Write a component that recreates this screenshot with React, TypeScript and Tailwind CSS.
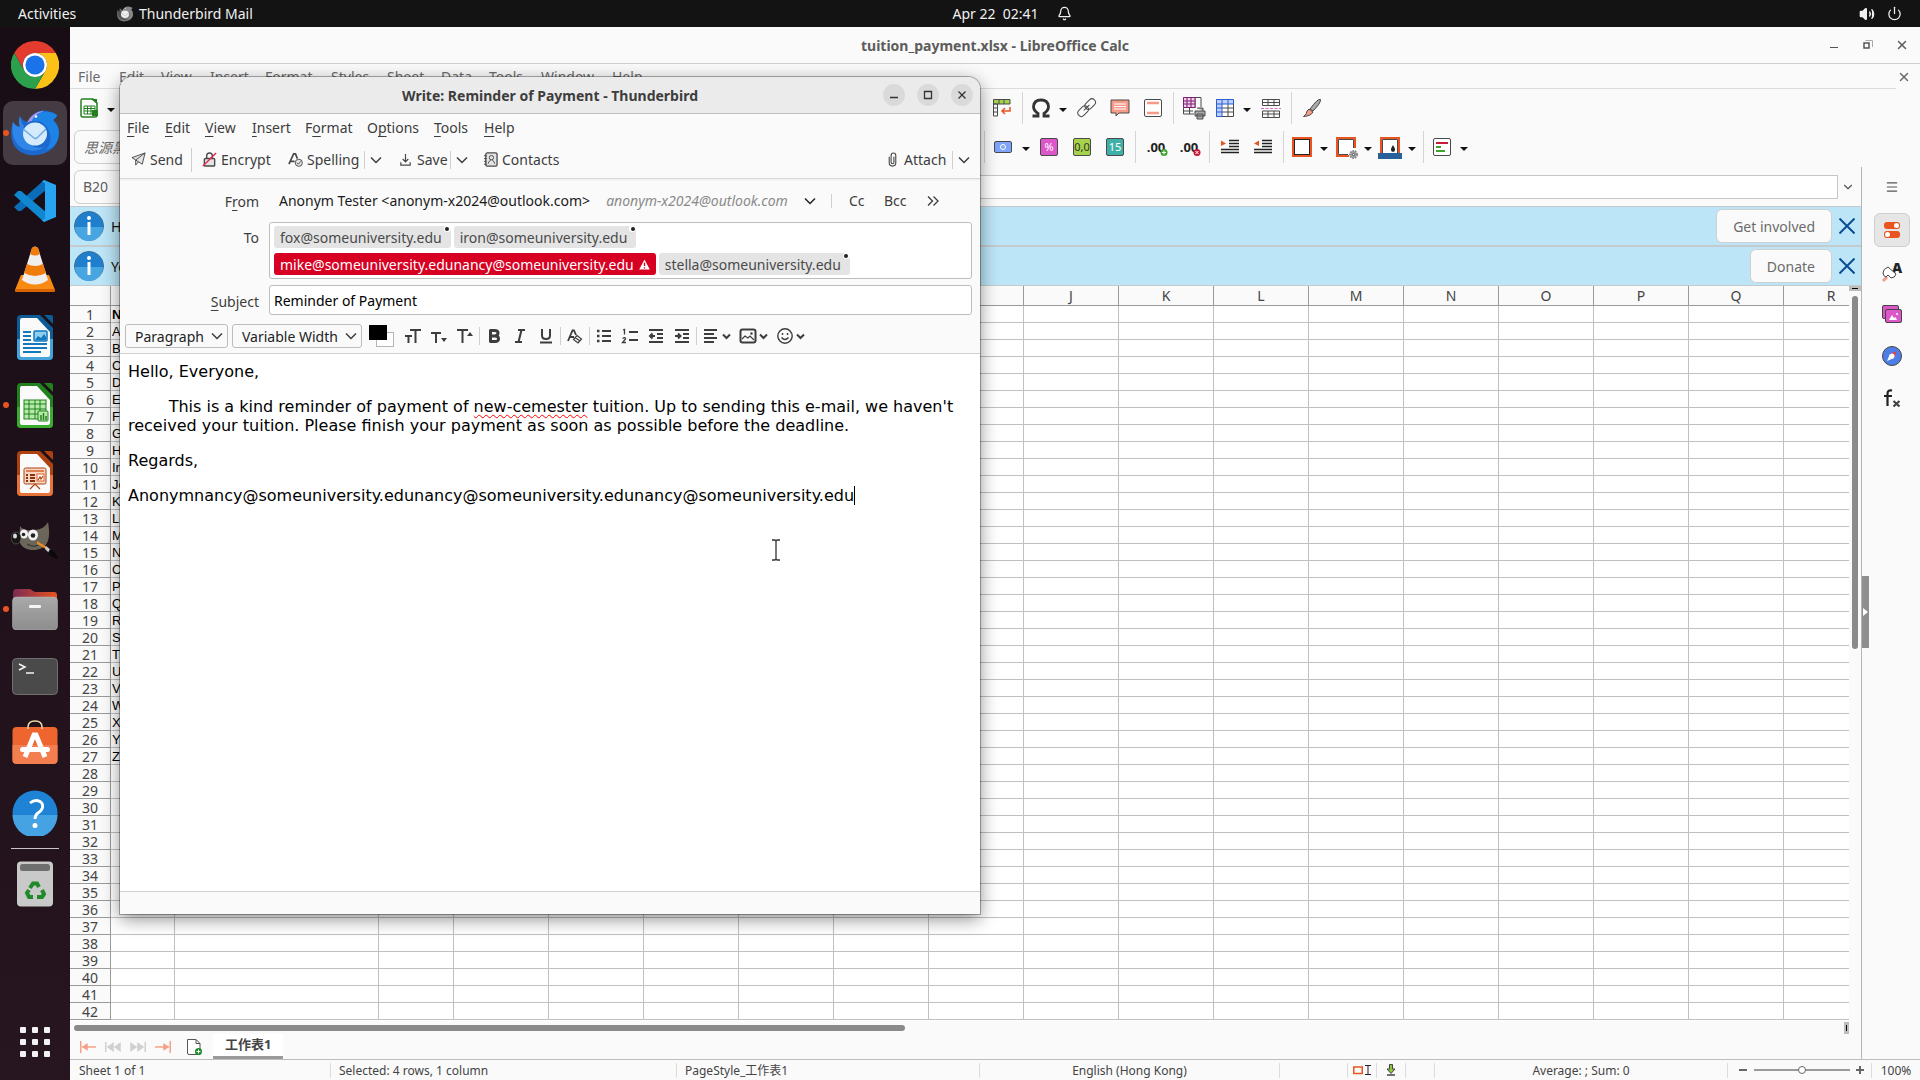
import React from 'react';
import { Bell, Power, Volume2, X, ChevronDown, Menu } from 'lucide-react';

const COLUMNS = [
  { name: 'A', width: 'w-[64px]' },
  { name: 'B', width: 'w-[204px]' },
  { name: 'C', width: 'w-[75px]' },
  ...'DEFGHIJKLMNOPQR'.split('').map((name) => ({ name, width: 'w-[95px]' })),
];

const FIRST_CELLS = [
  'N', 'A', 'B', 'C', 'D', 'E', 'F', 'G', 'H', 'Ir', 'Jo', 'K', 'Li', 'M', 'N', 'O', 'P', 'Q', 'R', 'S', 'T', 'U', 'V',
  'W', 'X', 'Y', 'Z',
];

const ROW_COUNT = 42;

const CALC_MENU = [
  ['File', 'w-[41px]'],
  ['Edit', 'w-[42px]'],
  ['View', 'w-[49px]'],
  ['Insert', 'w-[55px]'],
  ['Format', 'w-[66px]'],
  ['Styles', 'w-[56px]'],
  ['Sheet', 'w-[54px]'],
  ['Data', 'w-[48px]'],
  ['Tools', 'w-[52px]'],
  ['Window', 'w-[71px]'],
  ['Help', 'w-[40px]'],
];

// label, index of the underlined letter, width
const MAIL_MENU: [string, number, string][] = [
  ['File', 0, 'w-[38px]'],
  ['Edit', 0, 'w-[40px]'],
  ['View', 0, 'w-[47px]'],
  ['Insert', 0, 'w-[53px]'],
  ['Format', 1, 'w-[62px]'],
  ['Options', 1, 'w-[67px]'],
  ['Tools', 0, 'w-[50px]'],
  ['Help', 0, 'w-[40px]'],
];

type Children = { children?: React.ReactNode };

/* ---------- Dock icons ---------- */

const Chrome = () => (
  <svg viewBox="0 0 48 48" className="size-12">
    <path d="M24 12H44.8A24 24 0 0 0 3.2 12L13.6 30A12 12 0 0 1 24 12Z" fill="#e33b2e" />
    <path d="M44.8 12H24A12 12 0 0 1 34.4 30L24 48A24 24 0 0 0 44.8 12Z" fill="#fbc116" />
    <path d="M3.2 12L13.6 30A12 12 0 0 0 34.4 30L24 48A24 24 0 0 1 3.2 12Z" fill="#2da04e" />
    <circle cx="24" cy="24" r="12" fill="#fff" />
    <circle cx="24" cy="24" r="9.6" fill="#1a73e8" />
  </svg>
);

const Thunderbird = ({ mono = false }: { mono?: boolean }) => (
  <svg viewBox="0 0 48 48" className={mono ? 'size-4' : 'size-12'}>
    <path
      d="M9 7Q7 13 9 17Q5 18 2 13C-1 22 0 32 4 38C9 44 17 47 25 46C39 45 48 36 48 24C48 18 46 14 42 11Q46 8 46 6Q42 3 38 2.500C34 1 30 1 26 3C22 5 19 8 17 13Q11 12 9 7Z"
      fill={mono ? '#777' : '#1c68cf'}
    />
    <path d="M2 13C0 22 2 31 8 37C15 43 27 43 34 38C22 41 13 34 12 22L13 17Q10 14 9 7Q7 13 9 18Q5 18 2 13Z" fill={mono ? '#555' : '#2f86e6'} />
    <path d="M16 14C19 7 25 2 33 2C26 5 23 8 21 12Q18 12 16 14Z" fill={mono ? '#999' : '#a494ee'} />
    <path d="M21 12C23 6 30 2 38 3Q42 3 46 6Q46 8 42 11C47 16 49 22 47 29C45 36 41 40 34 41C40 36 41 29 38 22C35 14 28 11 21 12Z" fill={mono ? '#888' : '#1b84e6'} />
    <ellipse cx="24" cy="25" rx="12" ry="11.500" fill={mono ? '#eee' : '#d5ebfc'} />
    <path d="M12 20L23 29Q24 30 26 29L35 20" fill="none" stroke={mono ? '#aaa' : '#6aa9e6'} strokeWidth="1.500" />
    <circle cx="25" cy="7.500" r="1.300" fill="#fff" />
  </svg>
);

const VsCode = () => (
  <svg viewBox="0 0 42 42" className="size-[42px]">
    <path d="M0 27L4 31L7 31L33 9V2L30 0Z" fill="#0b6db8" />
    <path d="M0 15L4 11L7 11L33 33V40L30 42Z" fill="#1187d2" />
    <path d="M30 0L42 5V37L30 42L28 40L31 39V3L28 2Z" fill="#27a5f2" />
  </svg>
);

const Vlc = () => (
  <svg viewBox="0 0 42 46" className="h-[46px] w-[42px]">
    <path d="M7 29H35L41 44Q41 46 39 46H3Q1 46 1 44Z" fill="#f98b12" />
    <path d="M1 43H41V45Q41 46 39 46H3Q1 46 1 45Z" fill="#d96400" />
    <path d="M18 2Q21 -1 24 2L34 34Q21 43 8 34Z" fill="#f0efee" />
    <path d="M18 2Q21 -1 24 2L26 8Q21 11 16 8Z" fill="#f07c0c" />
    <path d="M13 18Q21 22 29 18L32 27Q21 33 10 27Z" fill="#f07c0c" />
  </svg>
);

const OfficeIcon = ({ color, light, children }: { color: string; light: string } & Children) => (
  <svg viewBox="0 0 36 45" className="h-[45px] w-9">
    <path d="M4 0H24L36 11V41Q36 45 32 45H4Q0 45 0 41V4Q0 0 4 0Z" fill={color} />
    <path d="M4 24H36V41Q36 45 32 45H4Q0 45 0 41V24Z" fill={light} />
    <path d="M5 3H20L33 17V40Q33 42 31 42H5Q3 42 3 40V5Q3 3 5 3Z" fill="#fafafa" />
    <path d="M23 0H26L36 9V13Z" fill="#1c1118" />
    <path d="M27 0H34Q36 0 36 2V9Z" fill={color} />
    {children}
  </svg>
);

const Writer = () => (
  <OfficeIcon color="#0d5c95" light="#45a3dc">
    <path d="M6 17H14M6 21H14M6 25H14M6 29H30M6 33H30M6 37H24" stroke="#1279bd" strokeWidth="2" />
    <rect x="17" y="16" width="13" height="10" rx="1" fill="#8fcdf2" stroke="#1279bd" strokeWidth="1.500" />
    <path d="M18 25L21 21L24 23L27 19L29 22V25Z" fill="#1279bd" />
  </OfficeIcon>
);

const Calc = () => (
  <OfficeIcon color="#23811d" light="#3aac2f">
    <rect x="7" y="17" width="22" height="19" fill="#b6eaaa" stroke="#23811d" />
    <path d="M7 21H29M7 26H29M7 31H29M12 17V36M18 17V36M23 17V36" stroke="#23811d" />
    <rect x="21" y="28" width="10" height="10" rx="1" fill="#b6eaaa" stroke="#23811d" />
    <path d="M24 37V32M26.500 37V30M29 37V33" stroke="#23811d" strokeWidth="1.500" />
  </OfficeIcon>
);

const Impress = () => (
  <OfficeIcon color="#ad4210" light="#e6733a">
    <rect x="7" y="17" width="22" height="16" rx="1.500" fill="#f8d6c4" stroke="#ad4210" />
    <path d="M9 20H27" stroke="#d9632a" strokeWidth="1.500" />
    <path d="M9 24H11M13 24H18M9 27H11M13 27H18M9 30H11M13 30H18" stroke="#8a320a" strokeWidth="2" />
    <rect x="20" y="23" width="7" height="7" fill="#fff" stroke="#d9632a" />
    <path d="M21 29L23 26L24 28L26 25M13 38L18 33L23 38" stroke="#ad4210" strokeWidth="1.200" fill="none" />
  </OfficeIcon>
);

const Gimp = () => (
  <svg viewBox="0 2 48 48" className="size-12">
    <path d="M9 11C12 15 16 16 22 15C30 15 34 12 37 7C39 18 39 29 31 33C23 37 12 35 9 28C8 22 9 16 9 11Z" fill="#6b665a" />
    <ellipse cx="13" cy="19" rx="4" ry="4.500" fill="#f2f2f2" />
    <circle cx="12.500" cy="19.500" r="1.800" fill="#222" />
    <ellipse cx="22" cy="20" rx="5" ry="5.500" fill="#f2f2f2" />
    <circle cx="22" cy="20.500" r="2.300" fill="#222" />
    <ellipse cx="5" cy="23" rx="5" ry="6" fill="#161616" stroke="#777" strokeWidth="0.500" />
    <ellipse cx="4" cy="21" rx="2" ry="2.500" fill="#ddd" />
    <path d="M16 29Q24 34 30 28" stroke="#2c2a24" fill="none" />
    <path d="M26 26L36 32L35 34L26 29Z" fill="#e98b25" />
    <path d="M35 31L40 35L38 38L34 34Z" fill="#c9c9c9" />
    <path d="M39 34Q45 37 47 44Q40 42 37 38Z" fill="#0a0a0a" />
  </svg>
);

const Files = () => (
  <svg viewBox="0 0 46 42" className="h-[42px] w-[46px]">
    <defs>
      <linearGradient id="folder" x1="0" x2="1">
        <stop offset="0" stopColor="#7b2a55" />
        <stop offset="1" stopColor="#e95420" />
      </linearGradient>
      <linearGradient id="front" x1="0" x2="0" y1="0" y2="1">
        <stop offset="0" stopColor="#a9a9a9" />
        <stop offset="1" stopColor="#8d8d8d" />
      </linearGradient>
    </defs>
    <path d="M1 12V5Q1 1 4 1H17Q19 1 21 3L23 4H42Q45 4 45 7V14Z" fill="url(#folder)" />
    <rect x="0.500" y="9" width="45" height="33" rx="4" fill="url(#front)" stroke="#bbb" strokeWidth="0.500" />
    <rect x="17" y="17" width="12" height="3" rx="1" fill="#f4f4f4" />
  </svg>
);

const Terminal = () => (
  <svg viewBox="0 0 46 38" className="h-[38px] w-[46px]">
    <rect x="0.500" y="0.500" width="45" height="36" rx="4" fill="#4a4a4a" stroke="#707070" />
    <path d="M7 6L13 9L7 12M14 15H22" stroke="#f4f4f4" strokeWidth="1.500" fill="none" />
  </svg>
);

const Software = () => (
  <svg viewBox="0 0 46 50" className="h-[50px] w-[46px]">
    <rect x="0.500" y="7" width="45" height="37" rx="4" fill="#ee6530" />
    <path d="M0.500 25H45.500V40Q45.500 44 41 44H5Q0.500 44 0.500 40Z" fill="#f37f50" />
    <path d="M16 9V7Q16 1 23 1T30 7V9" stroke="#f3dca8" strokeWidth="1.500" fill="none" />
    <path d="M13 37L22 15H24L33 37" stroke="#fff" strokeWidth="5" fill="none" />
    <rect x="8" y="27" width="30" height="5" rx="2.500" fill="#fff" />
  </svg>
);

const HelpIcon = () => (
  <svg viewBox="0 0 46 46" className="size-[46px]">
    <circle cx="23" cy="23" r="22.500" fill="#1e82d5" />
    <path d="M0.500 25H45.500A22.500 22.500 0 0 1 0.500 25Z" fill="#45a3e4" />
    <path d="M18 13Q23 9 28 11.500Q32 14 30 19Q29 21 26 23Q23 25 23 29" stroke="#fff" strokeWidth="2.800" fill="none" />
    <circle cx="23" cy="35.500" r="2.500" fill="#fff" />
  </svg>
);

const Trash = () => (
  <svg viewBox="0 0 38 46" className="h-[46px] w-[38px]">
    <rect x="1" y="0.500" width="36" height="45" rx="4" fill="#c9c9c9" />
    <rect x="4" y="3" width="30" height="7" rx="2.500" fill="#6f6f6f" />
    <g fill="none" stroke="#218a28" strokeWidth="4">
      <path d="M14 27L17 22.500H21L23 26" />
      <path d="M26 29L28 33L26 36H21" />
      <path d="M17 36H13L11 32L13 29" />
    </g>
  </svg>
);

const DOCK: { label: string; icon: React.ReactNode; running?: boolean; active?: boolean }[] = [
  { label: 'Google Chrome', icon: <Chrome /> },
  { label: 'Thunderbird Mail', icon: <Thunderbird />, running: true, active: true },
  { label: 'Visual Studio Code', icon: <VsCode /> },
  { label: 'VLC media player', icon: <Vlc /> },
  { label: 'LibreOffice Writer', icon: <Writer /> },
  { label: 'LibreOffice Calc', icon: <Calc />, running: true },
  { label: 'LibreOffice Impress', icon: <Impress /> },
  { label: 'GIMP', icon: <Gimp /> },
  { label: 'Files', icon: <Files />, running: true },
  { label: 'Terminal', icon: <Terminal /> },
  { label: 'Ubuntu Software', icon: <Software /> },
  { label: 'Help', icon: <HelpIcon /> },
];

function DockButton({ label, active, running, children }: { label: string; active?: boolean; running?: boolean } & Children) {
  return (
    <button
      aria-label={label}
      className={`relative flex size-16 shrink-0 items-center justify-center rounded-[10px] ${active ? 'bg-[#453c43]' : ''}`}
    >
      {running && <span className="absolute top-1/2 left-0 size-[6px] -translate-y-1/2 rounded-full bg-[#e95420]" />}
      {children}
    </button>
  );
}

function Dock() {
  return (
    <nav className="flex w-[70px] shrink-0 flex-col items-center gap-1 bg-gradient-to-b from-[#180d15] to-[#27151f] py-[6px]">
      {DOCK.map((app) => (
        <DockButton key={app.label} label={app.label} active={app.active} running={app.running}>
          {app.icon}
        </DockButton>
      ))}
      <hr className="-my-px h-px w-12 shrink-0 border-0 bg-[#c9c5c8]" />
      <DockButton label="Trash">
        <Trash />
      </DockButton>
      <div className="flex-1" />
      <DockButton label="Show Applications">
        <span className="grid grid-cols-3 gap-[6px]">
          {Array.from({ length: 9 }, (_, i) => (
            <span key={i} className="size-[6px] rounded-[1px] bg-[#f2f2f2]" />
          ))}
        </span>
      </DockButton>
    </nav>
  );
}

function TopBar() {
  return (
    <header className="grid h-[27px] shrink-0 grid-cols-[1fr_auto_1fr] items-center bg-[#131313] text-[14px] text-[#f0f0f0]">
      <div className="flex items-center pl-[18px]">
        <button className="w-[99px] text-left">Activities</button>
        <button className="flex items-center gap-[6px]">
          <Thunderbird mono />
          Thunderbird Mail
        </button>
      </div>
      <button className="flex items-center gap-[18px] pl-[104px]">
        <span className="whitespace-pre">Apr 22  02:41</span>
        <Bell size={15} strokeWidth={2} />
      </button>
      <div className="flex items-center justify-end gap-3 pr-[18px]">
        <button aria-label="Volume">
          <Volume2 size={16} strokeWidth={2} fill="#f0f0f0" />
        </button>
        <button aria-label="Power">
          <Power size={15} strokeWidth={2} />
        </button>
      </div>
    </header>
  );
}

/* ---------- Calc toolbars ---------- */

const Tool = ({ label, width, children }: { label: string; width: string } & Children) => (
  <button aria-label={label} className={`flex shrink-0 items-center ${width}`}>
    <svg viewBox="0 0 24 24" className="size-6 overflow-visible" fill="none" stroke="#4a4a4a">
      {children}
    </svg>
  </button>
);

const Caret = ({ width }: { width: string }) => (
  <button aria-label="More" className={`flex shrink-0 items-center ${width}`}>
    <svg viewBox="0 0 8 6" className="mt-[3px] h-[6px] w-2">
      <path d="M0 1H8L4 5Z" fill="#111" />
    </svg>
  </button>
);

const Sep = ({ width }: { width: string }) => (
  <div className={`flex shrink-0 ${width}`}>
    <span className="h-8 w-px bg-[#d5d5d5]" />
  </div>
);

function StandardToolbar() {
  return (
    <div className="flex h-[38px] shrink-0 items-center overflow-hidden pl-[7px]">
      <Tool label="Templates" width="w-[30px]">
        <path d="M5 3H16L20 7V19Q20 21 18 21H6Q4 21 4 19V5Q4 3 5 3Z" fill="#fff" stroke="#23811d" strokeWidth="1.500" />
        <path d="M14 3H20V8Z" fill="#23811d" stroke="none" />
        <path d="M7 10H18V18H7ZM7 12.500H18M7 15H18M10.500 10V18M14 10V18" stroke="#23811d" />
        <path d="M15 14H21V20H15Z" fill="#23811d" stroke="none" />
      </Tool>
      <Caret width="w-[16px]" />
      <div className="w-[867px] shrink-0" />
      <Tool label="Pivot table" width="w-[32px]">
        <path d="M3.500 3.500H20V8H3.500Z" fill="#a6d34b" />
        <path d="M3.500 8H7.500V20H3.500ZM3.500 12H7.500M3.500 16H7.500M9 3.500V8M14 3.500V8" />
        <path d="M20 11V15H12M15 12L12 15L15 18" stroke="#e95420" strokeWidth="1.500" />
      </Tool>
      <Sep width="w-[7px]" />
      <Tool label="Special character" width="w-[30px]">
        <path
          d="M3.500 20H9V17.500Q4.500 14.500 4.500 10.500Q5 4 12 4T19.500 10.500Q19.500 14.500 15 17.500V20H20.500"
          stroke="#333"
          strokeWidth="2.800"
        />
      </Tool>
      <Caret width="w-[16px]" />
      <Tool label="Hyperlink" width="w-[33px]">
        <g transform="rotate(-45 12 12)">
          <rect x="1" y="8" width="12" height="7" rx="3.500" />
          <rect x="11" y="8" width="12" height="7" rx="3.500" />
          <path d="M8 11.500H16" />
        </g>
      </Tool>
      <Tool label="Comment" width="w-[33px]">
        <path d="M3 4H21V17H11L8 20V17H3Z" fill="#f79b89" />
        <path d="M6 8H18M6 10.500H18M6 13H18" stroke="#fff" />
      </Tool>
      <Tool label="Headers and footers" width="w-[32px]">
        <rect x="3.500" y="3.500" width="17" height="17" rx="1.500" fill="#fff" />
        <path d="M6 7H18M6 17H18" stroke="#f79b89" strokeWidth="2.500" />
      </Tool>
      <Sep width="w-[9px]" />
      <Tool label="Print area" width="w-[31px]">
        <path d="M1.500 1.500H19M19 1.500V11M1.500 12V18H12M7.500 12V18M1.500 15H11M13 1.500V12" />
        <path d="M1.500 1.500H13V11.500H1.500ZM1.500 5H13M1.500 8H13M5 1.500V11.500M9 1.500V11.500" fill="#f2cdee" stroke="#7a1f6d" />
        <path d="M13 15H23V20H13ZM15 12H21V15M15 18H21V23H15Z" fill="#aaa" />
      </Tool>
      <Tool label="Freeze rows and columns" width="w-[30px]">
        <path d="M3.500 3.500H20.500V20.500H3.500ZM9 12H20.500M9 16H20.500M15 8V20.500" fill="#fff" />
        <path d="M3.500 3.500H20.500V8H9V20.500H3.500ZM3.500 8H9M3.500 12H9M3.500 16H9M9 3.500V8M15 3.500V8" fill="#bcd0fb" stroke="#2b5fd3" />
      </Tool>
      <Caret width="w-[16px]" />
      <Tool label="Split window" width="w-[32px]">
        <path d="M3.500 3.500H20.500V9.500H3.500ZM3.500 6.500H20.500M9 3.500V9.500M15 3.500V9.500M3.500 15H20.500V21.500H3.500ZM3.500 18H20.500M9 15V21.500M15 15V21.500" />
        <path d="M2 12.500H22" stroke="#dd70c8" strokeDasharray="3 1.500" />
      </Tool>
      <Sep width="w-[9px]" />
      <Tool label="Show draw functions" width="w-[30px]">
        <path d="M20.500 3.500Q18 2 10 13L13 15Q21 7 20.500 3.500Z" fill="#a9a9a9" />
        <path d="M9 13L13 16Q11 20 3.500 20.500Q7 18 7 15Z" fill="#f79b89" />
      </Tool>
    </div>
  );
}

const LabelTool = ({ label, width, fill, color, text }: { label: string; width: string; fill: string; color: string; text: string }) => (
  <Tool label={label} width={width}>
    <rect x="3.500" y="3.500" width="17" height="17" rx="1.500" fill={fill} />
    <text x="12" y="16" textAnchor="middle" fontSize="11" fill={color} stroke="none">
      {text}
    </text>
  </Tool>
);

const DecimalTool = ({ label, width, color, mark }: { label: string; width: string; color: string; mark: string }) => (
  <Tool label={label} width={width}>
    <text x="11" y="17" textAnchor="middle" fontSize="13" fontWeight="700" fill="#222" stroke="none">
      .00
    </text>
    <circle cx="19" cy="17.500" r="3.500" fill={color} stroke="none" />
    <path d={mark} stroke="#fff" />
  </Tool>
);

const IndentTool = ({ label, width, arrow }: { label: string; width: string; arrow: string }) => (
  <Tool label={label} width={width}>
    <path d="M11 5.500H21M11 8.500H21M11 11.500H21M3 14.500H21M3 17.500H21" stroke="#222" strokeWidth="1.300" />
    <path d={arrow} fill="#e95420" stroke="none" />
  </Tool>
);

function FormattingToolbar() {
  return (
    <div className="flex h-10 shrink-0 items-center overflow-hidden pl-1">
      <input
        aria-label="Font Name"
        defaultValue="思源黑体"
        className="h-[34px] w-[160px] shrink-0 rounded-md border border-[#cfcfcf] bg-[#fafafa] px-[9px] text-[14px] text-[#6b6b6b] italic"
      />
      <div className="w-[750px] shrink-0" />
      <Sep width="w-[7px]" />
      <Tool label="Currency" width="w-[31px]">
        <rect x="3.500" y="6.500" width="17" height="11" rx="1.500" fill="#7ea5fb" />
        <circle cx="12" cy="12" r="2.500" stroke="#fff" />
      </Tool>
      <Caret width="w-[15px]" />
      <LabelTool label="Percent" width="w-[33px]" fill="#dd57cb" color="#fff" text="%" />
      <LabelTool label="Number" width="w-[33px]" fill="#a6d34b" color="#333" text="0,0" />
      <LabelTool label="Date" width="w-[32px]" fill="#3fb0a7" color="#fff" text="15" />
      <Sep width="w-[10px]" />
      <DecimalTool label="Add decimal place" width="w-[33px]" color="#3ba529" mark="M17 17.500H21M19 15.500V19.500" />
      <DecimalTool label="Delete decimal place" width="w-[31px]" color="#c61b3b" mark="M17.500 16L20.500 19M20.500 16L17.500 19" />
      <Sep width="w-[9px]" />
      <IndentTool label="Increase indent" width="w-[33px]" arrow="M3 5.500L8 8.500L3 11Z" />
      <IndentTool label="Decrease indent" width="w-[32px]" arrow="M8 5.500L3 8.500L8 11Z" />
      <Sep width="w-[7px]" />
      <Tool label="Borders" width="w-[30px]">
        <rect x="3" y="3" width="18" height="18" fill="#fff" stroke="#e95420" strokeWidth="2" />
        <rect x="4.500" y="4.500" width="15" height="15" stroke="#222" />
      </Tool>
      <Caret width="w-[14px]" />
      <Tool label="Border style" width="w-[30px]">
        <path d="M15 21H3V3H21V13" fill="#fff" stroke="#e95420" strokeWidth="2" />
        <path d="M14 19.500H4.500V4.500H19.500V13" />
        <circle cx="19.500" cy="19.500" r="3.500" fill="#aaa" stroke="#888" strokeDasharray="1.500 1" strokeWidth="2" />
        <circle cx="19.500" cy="19.500" r="1.200" fill="#fff" />
      </Tool>
      <Caret width="w-[14px]" />
      <Tool label="Border color" width="w-[30px]">
        <path d="M3 19V3H21V19" fill="#fff" stroke="#e95420" strokeWidth="2" />
        <path d="M4.500 18V4.500H19.500V18" />
        <path d="M15 10Q11 16 15 17Q19 16 15 10Z" fill="#222" stroke="none" />
        <rect x="0" y="18" width="24" height="6" fill="#2a6099" stroke="none" />
      </Tool>
      <Caret width="w-[15px]" />
      <Sep width="w-[7px]" />
      <Tool label="Conditional" width="w-[30px]">
        <rect x="3.500" y="3.500" width="17" height="17" rx="1.500" fill="#fff" />
        <path d="M6 8H18" stroke="#c61b3b" strokeWidth="2" />
        <path d="M6 12H11M6 16H15" stroke="#3ba529" strokeWidth="2" />
      </Tool>
      <Caret width="w-[14px]" />
    </div>
  );
}

function InfoBar({ text, action }: { text: string; action: string }) {
  return (
    <div className="flex h-10 shrink-0 items-center border-y border-[#c6cacc] bg-[#bce5f7] pr-[6px] pl-1 text-[14px]">
      <svg viewBox="0 0 30 30" className="size-[30px] shrink-0">
        <circle cx="15" cy="15" r="14.500" fill="#1f7fcc" stroke="#3d6e93" />
        <path d="M1 16H29A14 14 0 0 1 1 16Z" fill="#47a5e2" />
        <circle cx="15" cy="7" r="2" fill="#fff" />
        <path d="M15 11V24" stroke="#fff" strokeWidth="3" />
      </svg>
      <span className="flex-1 pl-[7px] text-[#111]">{text}</span>
      <button className="h-[34px] rounded-md border border-[#cfcfcf] bg-[#fafafa] px-4 text-[#6b6b6b]">{action}</button>
      <button aria-label="Close" className="ml-[7px]">
        <svg viewBox="0 0 16 16" className="size-4" stroke="#0b4d92" strokeWidth="2">
          <path d="M0.500 0.500L15.500 15.500M15.500 0.500L0.500 15.500" />
        </svg>
      </button>
    </div>
  );
}

function Sheet() {
  return (
    <div className="flex min-h-0 flex-1">
      <div className="min-w-0 flex-1 overflow-hidden bg-white">
        <table className="w-[1809px] table-fixed border-separate border-spacing-0">
          <thead>
            <tr className="text-[14px] leading-[19px] text-[#444]">
              <th className="h-[20px] w-[41px] border-r border-b border-[#9a9a9a] bg-[#fafafa] p-0" />
              {COLUMNS.map((col) => (
                <th
                  key={col.name}
                  className={`h-[20px] border-r border-b border-[#9a9a9a] bg-[#fafafa] p-0 font-normal ${col.width}`}
                >
                  {col.name}
                </th>
              ))}
            </tr>
          </thead>
          <tbody>
            {Array.from({ length: ROW_COUNT }, (_, row) => (
              <tr key={row} className="text-[14px] leading-[14px]">
                <th className="h-[17px] border-r border-b border-[#9a9a9a] bg-[#fafafa] px-0 pt-[2px] pb-0 font-normal text-[#444]">
                  {row + 1}
                </th>
                {COLUMNS.map((col, i) => (
                  <td
                    key={col.name}
                    className={`h-[17px] border-r border-b border-[#c0c0c0] px-px pt-[2px] pb-0 font-['Liberation_Sans'] text-[13px] text-black ${
                      row === 0 ? 'font-bold' : ''
                    }`}
                  >
                    {i === 0 ? FIRST_CELLS[row] : null}
                  </td>
                ))}
              </tr>
            ))}
          </tbody>
        </table>
      </div>
      <div className="flex w-3 shrink-0 flex-col items-center">
        <div className="flex h-[5px] w-full items-center justify-center bg-[#bdbdbd]">
          <span className="h-px w-[6px] bg-black" />
        </div>
        <div className="mt-[5px] h-[48%] w-[6px] rounded-full bg-[#8a8a8a]" />
      </div>
    </div>
  );
}

const SheetNav = ({ label, d, color }: { label: string; d: string; color: string }) => (
  <button aria-label={label} className="flex w-[25px] shrink-0 items-center">
    <svg viewBox="0 0 16 12" className="h-3 w-4" stroke={color} fill={color} strokeWidth="1.500">
      <path d={d} />
    </svg>
  </button>
);

function SheetTabs() {
  return (
    <div className="flex h-[25px] shrink-0 items-center pl-[10px]">
      <SheetNav label="First sheet" color="#f5a189" d="M0.750 0V12M2 6H16M7 3.500L3 6L7 8.500Z" />
      <SheetNav label="Previous sheet" color="#d0d0d0" d="M0.750 1V11M8 2.500L3 6L8 9.500ZM15 2.500L10 6L15 9.500Z" />
      <SheetNav label="Next sheet" color="#d0d0d0" d="M15.250 1V11M1 2.500L6 6L1 9.500ZM8 2.500L13 6L8 9.500Z" />
      <SheetNav label="Last sheet" color="#f5a189" d="M15.250 0V12M0 6H14M9 3.500L13 6L9 8.500Z" />
      <button aria-label="Add sheet" className="ml-[5px] flex w-[28px] shrink-0">
        <svg viewBox="0 0 18 18" className="size-[18px]" fill="none" stroke="#555">
          <path d="M2.500 1.500H11L15 5.500V16.500H4Q2.500 16.500 2.500 15ZM11 1.500V5.500H15" fill="#fff" />
          <circle cx="13.500" cy="13.500" r="3.500" fill="#1d8a28" stroke="none" />
          <path d="M11.500 13.500H15.500M13.500 11.500V15.500" stroke="#fff" />
        </svg>
      </button>
      <button className="h-full border-b-[3px] border-[#9a9a9a] bg-white px-3 text-[13px] font-bold text-[#444]">工作表1</button>
    </div>
  );
}

const StatusItem = ({ width, children }: { width: string } & Children) => (
  <div className={`flex h-[15px] shrink-0 items-center border-r border-[#dcdcdc] ${width}`}>{children}</div>
);

function StatusBar() {
  return (
    <footer className="flex h-[21px] shrink-0 items-center border-t border-[#bdbdbd] text-[12px] leading-[15px] text-[#444]">
      <StatusItem width="w-[261px] pl-[9px]">Sheet 1 of 1</StatusItem>
      <StatusItem width="w-[346px] pl-2">Selected: 4 rows, 1 column</StatusItem>
      <StatusItem width="w-[303px] pl-2">PageStyle_工作表1</StatusItem>
      <StatusItem width="w-[300px] justify-center">English (Hong Kong)</StatusItem>
      <StatusItem width="w-[68px]" />
      <StatusItem width="w-[29px] justify-center">
        <svg viewBox="0 0 18 10" className="h-[10px] w-[18px]" fill="none">
          <rect x="0.750" y="2" width="8.500" height="6.500" stroke="#e95420" strokeWidth="1.500" />
          <path d="M12 0.500H18M15 0.500V9.500M12 9.500H18" stroke="#222" />
        </svg>
      </StatusItem>
      <StatusItem width="w-[29px] justify-center">
        <svg viewBox="0 0 10 12" className="h-3 w-[10px]">
          <path d="M3.500 0.500H6.500V5H9L5 9.500L1 5H3.500Z" fill="#8cc63a" stroke="#444" />
          <path d="M1 11H9" stroke="#444" strokeWidth="1.500" />
        </svg>
      </StatusItem>
      <StatusItem width="w-[29px]" />
      <div className="flex h-[15px] flex-1 items-center justify-center border-r border-[#dcdcdc]">Average: ; Sum: 0</div>
      <div className="flex h-[15px] w-[144px] shrink-0 items-center justify-between border-r border-[#dcdcdc] pr-[7px] pl-[11px]">
        <button aria-label="Zoom out" className="h-[2px] w-2 bg-[#666]" />
        <input
          type="range"
          aria-label="Zoom"
          defaultValue={50}
          className="h-[9px] w-[96px] appearance-none bg-transparent [&::-webkit-slider-runnable-track]:h-[2px] [&::-webkit-slider-runnable-track]:bg-[#9a9a9a] [&::-webkit-slider-thumb]:-mt-[3px] [&::-webkit-slider-thumb]:size-2 [&::-webkit-slider-thumb]:appearance-none [&::-webkit-slider-thumb]:rounded-full [&::-webkit-slider-thumb]:border [&::-webkit-slider-thumb]:border-[#666] [&::-webkit-slider-thumb]:bg-white"
        />
        <button aria-label="Zoom in">
          <svg viewBox="0 0 8 8" className="size-2" stroke="#666" strokeWidth="2">
            <path d="M0 4H8M4 0V8" />
          </svg>
        </button>
      </div>
      <span className="w-12 shrink-0 text-center">100%</span>
    </footer>
  );
}

function Sidebar() {
  const item = 'flex h-[34px] w-9 items-center justify-center';
  return (
    <aside className="relative flex w-[58px] shrink-0 flex-col items-center gap-2 pt-[2px] pl-[2px]">
      <button
        aria-label="Hide sidebar"
        className="absolute top-[409px] left-0 flex h-[72px] w-[7px] items-center justify-center bg-[#8f8f8f]"
      >
        <svg viewBox="0 0 5 8" className="h-2 w-[5px]">
          <path d="M0 0L5 4L0 8Z" fill="#fff" />
        </svg>
      </button>
      <button aria-label="Sidebar settings" className="flex size-9 items-center justify-center text-[#555]">
        <Menu size={14} strokeWidth={2} />
      </button>
      <button aria-label="Properties" className={`${item} rounded-md border border-[#cfcfcf] bg-[#e6e6e6]`}>
        <svg viewBox="0 0 16 16" className="size-4">
          <rect width="16" height="7" rx="3" fill="#e95420" />
          <circle cx="12.500" cy="3.500" r="2.500" fill="#fff" />
          <rect y="9" width="16" height="7" rx="3" fill="#e95420" />
          <circle cx="3.500" cy="12.500" r="2.500" fill="#fff" />
        </svg>
      </button>
      <button aria-label="Styles" className={item}>
        <svg viewBox="0 0 22 22" className="size-[22px] overflow-visible" fill="none" stroke="#444">
          <path d="M2 20L6 16" stroke="#f79b89" strokeWidth="3" />
          <text x="11" y="12" fontSize="14" fontWeight="900" fill="#222" stroke="none">
            A
          </text>
          <path d="M2 12Q2 8 7 6L15 13Q14 17 10 17L7 14L5 16Q2 15 2 12Z" fill="#fff" />
        </svg>
      </button>
      <button aria-label="Gallery" className={item}>
        <svg viewBox="0 0 20 18" className="h-[18px] w-5" stroke="#444">
          <rect x="0.500" y="0.500" width="16" height="13" rx="1.500" fill="#dd57cb" />
          <rect x="3.500" y="4.500" width="16" height="13" rx="1.500" fill="#dd57cb" />
          <path d="M7 15L10 10L12 13L13.500 12L15 15Z" fill="#fff" stroke="none" />
          <circle cx="15" cy="9" r="1" fill="#fff" stroke="none" />
        </svg>
      </button>
      <button aria-label="Navigator" className={item}>
        <svg viewBox="0 0 20 20" className="size-5">
          <circle cx="10" cy="10" r="9.500" fill="#4d7ee8" stroke="#444" />
          <path d="M5 15L8 8L12 12Z" fill="#fff" />
          <path d="M15 5L8 8L12 12Z" fill="#e0414a" />
          <circle cx="10" cy="10" r="2.500" fill="#fff" />
        </svg>
      </button>
      <button aria-label="Functions" className={item}>
        <svg viewBox="0 0 18 18" className="size-[18px]" fill="none" stroke="#222" strokeWidth="2.200">
          <path d="M9 1.500Q4.500 0.500 4.500 5V17M1 7H9" />
          <path d="M10.500 12L16.500 17.500M16.500 12L10.500 17.500" stroke="#444" />
        </svg>
      </button>
    </aside>
  );
}

function CalcWindow() {
  return (
    <section aria-label="LibreOffice Calc" className="flex min-w-0 flex-1 flex-col bg-[#fafafa]">
      <div className="grid h-[37px] shrink-0 grid-cols-[1fr_auto_1fr] items-center border-b border-[#cfcfcf] text-[#5c5c5c]">
        <span />
        <h1 className="text-[14px] font-bold">tuition_payment.xlsx - LibreOffice Calc</h1>
        <div className="flex justify-end pr-[1px]">
          <button aria-label="Minimize" className="flex w-[34px] items-center justify-center pt-[5px]">
            <span className="h-px w-2 bg-[#555]" />
          </button>
          <button aria-label="Restore" className="flex w-[34px] items-center justify-center">
            <svg viewBox="0 0 10 10" className="size-[10px]" fill="none">
              <path d="M2.500 0.500H9.500V7" stroke="#aaa" />
              <rect x="1" y="3" width="5" height="5" stroke="#555" strokeWidth="1.500" />
            </svg>
          </button>
          <button aria-label="Close" className="flex w-[34px] items-center justify-center">
            <X size={14} strokeWidth={2.5} />
          </button>
        </div>
      </div>
      <div className="flex h-[25px] shrink-0 items-center text-[#6b6b6b]">
        <nav className="flex h-full min-w-0 flex-1 items-center border-b border-[#dcdcdc] pl-2 text-[14px]">
          {CALC_MENU.map(([name, width]) => (
            <button key={name} className={`shrink-0 text-left ${width}`}>
              {name}
            </button>
          ))}
        </nav>
        <button aria-label="Close document" className="w-6 pl-px">
          <X size={14} strokeWidth={2.5} />
        </button>
      </div>
      <StandardToolbar />
      <FormattingToolbar />
      <div className="flex min-h-0 flex-1">
        <div className="flex min-w-0 flex-1 flex-col border-r border-[#b5b5b5]">
          <div className="flex h-[39px] shrink-0 items-center pr-[6px] pl-1">
            <input
              aria-label="Name Box"
              defaultValue="B20"
              className="h-[34px] w-[130px] rounded-md border border-[#cfcfcf] bg-[#fafafa] px-2 text-[14px] text-[#5c5c5c]"
            />
            <div className="w-[90px] shrink-0" />
            <input aria-label="Input line" className="h-6 min-w-0 flex-1 border border-[#c6c6c6] bg-white px-1 text-[14px]" />
            <button aria-label="Expand formula bar" className="ml-[3px] text-[#555]">
              <ChevronDown size={14} strokeWidth={2} />
            </button>
          </div>
          <InfoBar text="H" action="Get involved" />
          <InfoBar text="Yo" action="Donate" />
          <Sheet />
          <div className="flex h-[13px] shrink-0 items-center justify-between pr-3 pl-1">
            <div className="h-[6px] w-[831px] rounded-full bg-[#8a8a8a]" />
            <div className="flex h-3 w-[5px] items-center justify-center bg-[#bdbdbd]">
              <span className="h-[6px] w-px bg-black" />
            </div>
          </div>
          <SheetTabs />
        </div>
        <Sidebar />
      </div>
      <StatusBar />
    </section>
  );
}

/* ---------- Compose window ---------- */

const Divider = ({ className }: { className: string }) => <span className={`w-px shrink-0 bg-[#cfcfcf] ${className}`} />;

const Chevron = ({ label }: { label: string }) => (
  <button aria-label={label} className="flex w-[12px] shrink-0 justify-center">
    <svg viewBox="0 0 12 8" className="h-2 w-3" fill="none" stroke="#3d3d3d" strokeWidth="1.500">
      <path d="M1 1.500L6 6.500L11 1.500" />
    </svg>
  </button>
);

const MailTool = ({ label, width, children }: { label: string; width: string } & Children) => (
  <button className={`flex shrink-0 items-center gap-1 ${width}`}>
    <svg viewBox="0 0 16 16" className="size-[15px] shrink-0" fill="none" stroke="#4a4a4a">
      {children}
    </svg>
    {label}
  </button>
);

function MailToolbar() {
  return (
    <div className="flex h-[38px] shrink-0 items-center border-b border-[#d8d8d8] pr-[10px] pl-[11px] shadow-[0_1px_2px_rgba(0,0,0,0.06)]">
      <MailTool label="Send" width="w-[60px]">
        <path d="M15 1L1 6L5 8.500L15 1L12 13L8 10.500L5 8.500M5 8.500V14L8 10.500" fill="#e4e4e4" />
      </MailTool>
      <Divider className="mr-[10px] h-6" />
      <MailTool label="Encrypt" width="w-[86px]">
        <rect x="2.500" y="7" width="11" height="8" rx="1" fill="#e4e4e4" strokeWidth="1.500" />
        <path d="M5 7V4Q5 1 8 1T11 4V7" strokeWidth="1.500" />
        <path d="M1 15L15 1" stroke="#e22850" strokeWidth="1.500" />
      </MailTool>
      <MailTool label="Spelling" width="w-[76px]">
        <path d="M1 13L6 2H8L10 7M3 10H7" strokeWidth="1.800" />
        <circle cx="11.500" cy="11.500" r="3.800" fill="#e4e4e4" />
        <path d="M9.500 11.500L11 13L13.500 10" />
      </MailTool>
      <Divider className="mr-[5px] h-[18px]" />
      <Chevron label="Spelling options" />
      <div className="w-[16px] shrink-0" />
      <MailTool label="Save" width="w-[52px]">
        <path d="M8 2V10M5 7.500L8 10.500L11 7.500M3 11V14H13V11" strokeWidth="1.300" />
      </MailTool>
      <Divider className="mr-[5px] h-[18px]" />
      <Chevron label="Save options" />
      <div className="w-[15px] shrink-0" />
      <MailTool label="Contacts" width="w-[90px]">
        <rect x="3" y="1" width="12" height="14" rx="1.500" fill="#e4e4e4" strokeWidth="1.400" />
        <circle cx="9" cy="6" r="2.300" />
        <path d="M5.500 12.500Q6 9.500 8 9V8M12.500 12.500Q12 9.500 10 9V8M1 4H4M1 7H4M1 10H4M1 13H4" />
      </MailTool>
      <div className="flex-1" />
      <MailTool label="Attach" width="w-[67px]">
        <path d="M4.500 5V11.500Q4.500 15 8 15T11.500 11.500V4Q11.500 1 9 1T6.500 4V11Q6.500 12.500 8 12.500T9.500 11V5" strokeWidth="1.200" />
      </MailTool>
      <Divider className="mr-[5px] h-[18px]" />
      <Chevron label="Attach options" />
    </div>
  );
}

const Chip = ({ address }: { address: string }) => (
  <span className="relative flex h-[22px] items-center rounded-[3px] bg-[#e4e4e4] pr-[9px] pl-[6px] text-[#4a4a4a]">
    {address}
    <span className="absolute -top-px right-0 flex size-[7px] items-center justify-center rounded-full bg-white">
      <span className="size-1 rounded-full bg-[#222]" />
    </span>
  </span>
);

const FormatTool = ({ label, width, menu, children }: { label: string; width: string; menu?: boolean } & Children) => (
  <button aria-label={label} className={`flex shrink-0 items-center ${width}`}>
    <svg viewBox="0 0 16 16" className="size-4 shrink-0 overflow-visible" fill="none" stroke="#3d3d3d" strokeWidth="2">
      {children}
      {menu && <path d="M20 6.500L23.500 10L27 6.500" />}
    </svg>
  </button>
);

function FormatToolbar() {
  const select = 'h-6 appearance-none rounded-[3px] border border-[#bdbdbd] bg-[#fafafa] pl-[9px] text-[14px] text-[#222]';
  return (
    <div className="flex h-[39px] shrink-0 items-center border-b border-[#d0d0d0] pt-[4px] pl-[5px]">
      <label className="relative mr-[4px] flex items-center">
        <select aria-label="Paragraph format" className={`${select} w-[103px]`}>
          <option>Paragraph</option>
        </select>
        <span className="pointer-events-none absolute right-[5px]">
          <Chevron label="Open" />
        </span>
      </label>
      <label className="relative mr-[7px] flex items-center">
        <select aria-label="Font" className={`${select} w-[130px]`}>
          <option>Variable Width</option>
        </select>
        <span className="pointer-events-none absolute right-[5px]">
          <Chevron label="Open" />
        </span>
      </label>
      <button aria-label="Text color" className="mr-[11px] shrink-0">
        <svg viewBox="0 0 25 22" className="h-[22px] w-[25px]">
          <rect x="7.500" y="7.500" width="17" height="14" fill="#fff" stroke="#b5b5b5" />
          <rect width="18" height="15" fill="#000" />
        </svg>
      </button>
      <FormatTool label="Smaller font" width="w-[26px]">
        <path d="M5 2H16M10.500 2V15M0 8H7M3.500 8V15" />
      </FormatTool>
      <FormatTool label="Decrease font size" width="w-[26px]">
        <path d="M0 5H10M5 5V15" />
        <path d="M10 10H16L13 14Z" fill="#3d3d3d" stroke="none" />
      </FormatTool>
      <FormatTool label="Increase font size" width="w-[22px]">
        <path d="M0 2H11M5.500 2V15" />
        <path d="M10 8H16L13 4Z" fill="#3d3d3d" stroke="none" />
      </FormatTool>
      <Divider className="mr-[6px] h-[18px]" />
      <FormatTool label="Bold" width="w-[26px]">
        <path d="M3.500 2.500H8.500Q12 2.500 12 5T9 8H3.500M9 8Q12.500 8 12.500 10.800T9 13.500H3.500M4.500 2V14" strokeWidth="3" />
      </FormatTool>
      <FormatTool label="Italic" width="w-[26px]">
        <path d="M6 2H13M3 14H10M9.500 2L6.500 14" />
      </FormatTool>
      <FormatTool label="Underline" width="w-[22px]">
        <path d="M4 1V7.500Q4 11 8 11T12 7.500V1M2 14.500H14" />
      </FormatTool>
      <Divider className="mr-[6px] h-[18px]" />
      <FormatTool label="Remove formatting" width="w-[22px]">
        <path d="M1 13L5.500 2.500H7L9 7M3 9H7" strokeWidth="1.800" />
        <path d="M10 7.500L14.500 11L11 15L6.500 11.500ZM8 9.500L13 13" strokeWidth="1.200" />
      </FormatTool>
      <Divider className="mr-[6px] h-[18px]" />
      <FormatTool label="Bulleted list" width="w-[26px]">
        <path d="M6 3H15M6 8H15M6 13H15" />
        <path d="M1 3H3.500M1 8H3.500M1 13H3.500" strokeWidth="2.500" />
      </FormatTool>
      <FormatTool label="Numbered list" width="w-[26px]">
        <path d="M7 4H16M7 12H16" />
        <path d="M1 2L2.500 1.500V6.500M0.500 10.500Q3.500 8.500 3.500 11L0.500 14.500H4" strokeWidth="1.300" />
      </FormatTool>
      <FormatTool label="Outdent" width="w-[26px]">
        <path d="M1 2H15M9 6H15M9 10H15M1 14H15M7 8H2M4.500 5.500L2 8L4.500 10.500" />
      </FormatTool>
      <FormatTool label="Indent" width="w-[22px]">
        <path d="M1 2H15M9 6H15M9 10H15M1 14H15M1 8H6M4 5.500L6.500 8L4 10.500" />
      </FormatTool>
      <Divider className="mr-[6px] h-[18px]" />
      <FormatTool label="Alignment" width="w-[37px]" menu>
        <path d="M1 2H14M1 6H11M1 10H14M1 14H11" />
      </FormatTool>
      <FormatTool label="Insert" width="w-[37px]" menu>
        <rect x="0.500" y="1.500" width="15" height="13" rx="2" />
        <path d="M2 11L5 8L8 10L10 8L14 12" strokeWidth="1.200" />
        <circle cx="11.500" cy="5.500" r="1.200" fill="#3d3d3d" stroke="none" />
      </FormatTool>
      <FormatTool label="Emoji" width="w-[37px]" menu>
        <circle cx="8" cy="8" r="7.200" strokeWidth="1.400" />
        <path d="M4.500 9.500Q8 13.500 11.500 9.500M5.500 5V7M10.500 5V7" strokeWidth="1.400" />
      </FormatTool>
    </div>
  );
}

const WindowButton = ({ label, d }: { label: string; d: string }) => (
  <button aria-label={label} className="flex size-[22px] items-center justify-center rounded-full bg-[#dadada]">
    <svg viewBox="0 0 10 10" className="size-[10px]" fill="none" stroke="#333" strokeWidth="1.300">
      <path d={d} />
    </svg>
  </button>
);

function ComposeWindow() {
  return (
    <section
      aria-label="Write message"
      className="absolute top-[77px] left-[120px] flex h-[837px] w-[860px] flex-col overflow-hidden rounded-t-xl bg-[#fafafa] text-[14px] text-[#3d3d3d] shadow-[0_0_0_1px_rgba(0,0,0,0.3),0_5px_18px_rgba(0,0,0,0.45)]"
    >
      <div className="grid h-[37px] shrink-0 grid-cols-[1fr_auto_1fr] items-center border-b border-[#bdbdbd] bg-[#ebebeb]">
        <span />
        <h2 className="font-bold">Write: Reminder of Payment - Thunderbird</h2>
        <div className="flex justify-end gap-3 pr-[7px]">
          <WindowButton label="Minimize" d="M1 7.500H9" />
          <WindowButton label="Maximize" d="M1.500 1.500H8.500V8.500H1.500Z" />
          <WindowButton label="Close" d="M1.500 1.500L8.500 8.500M8.500 1.500L1.500 8.500" />
        </div>
      </div>
      <nav className="flex h-[27px] shrink-0 items-center pl-[7px]">
        {MAIL_MENU.map(([name, key, width]) => (
          <button key={name} className={`shrink-0 text-left ${width}`}>
            {name.slice(0, key)}
            <span className="underline underline-offset-[3px]">{name[key]}</span>
            {name.slice(key + 1)}
          </button>
        ))}
      </nav>
      <MailToolbar />

      <div className="grid shrink-0 grid-cols-[139px_1fr] items-start gap-x-[10px] pr-2">
        <span className="pt-3 text-right">
          F<span className="underline underline-offset-[3px]">r</span>om
        </span>
        <div className="flex h-[43px] items-center pl-[10px]">
          <button className="flex w-[537px] shrink-0 items-center justify-between">
            <span className="text-[#1a1a1a]">Anonym Tester &lt;anonym-x2024@outlook.com&gt;</span>
            <span className="text-[#8a8a8a] italic">anonym-x2024@outlook.com</span>
            <svg viewBox="0 0 12 8" className="h-2 w-3" fill="none" stroke="#222" strokeWidth="1.500">
              <path d="M1 1.500L6 6.500L11 1.500" />
            </svg>
          </button>
          <Divider className="mr-[17px] ml-[15px] h-[14px]" />
          <button className="w-[35px] text-left">Cc</button>
          <button className="w-[43px] text-left">Bcc</button>
          <button aria-label="Other fields">
            <svg viewBox="0 0 12 10" className="h-[10px] w-3" fill="none" stroke="#3d3d3d" strokeWidth="1.300">
              <path d="M1 0.500L5.500 5L1 9.500M6.500 0.500L11 5L6.500 9.500" />
            </svg>
          </button>
        </div>

        <label htmlFor="to" className="pt-[5px] text-right">
          To
        </label>
        <div className="flex flex-wrap gap-x-[3px] gap-y-[5px] rounded-[3px] border border-[#bdbdbd] bg-white px-1 py-[3px]">
          <Chip address="fox@someuniversity.edu" />
          <Chip address="iron@someuniversity.edu" />
          <span className="flex h-[22px] items-center gap-[5px] rounded-[3px] bg-[#d70022] px-[6px] text-white">
            mike@someuniversity.edunancy@someuniversity.edu
            <svg viewBox="0 0 12 12" className="size-[11px]">
              <path d="M6 0.500L11.800 11.500H0.200Z" fill="#fff" />
              <path d="M6 4V7.500M6 9V10.300" stroke="#d70022" strokeWidth="1.500" />
            </svg>
          </span>
          <Chip address="stella@someuniversity.edu" />
          <input id="to" className="h-[22px] w-[80px] outline-none" />
        </div>

        <label htmlFor="subject" className="pt-3 text-right">
          <span className="underline underline-offset-[3px]">S</span>ubject
        </label>
        <input
          id="subject"
          defaultValue="Reminder of Payment"
          className="mt-[6px] h-[30px] rounded-[3px] border border-[#bdbdbd] bg-white px-1 text-black"
        />
      </div>

      <FormatToolbar />

      <div
        role="textbox"
        aria-label="Message body"
        className="flex-1 space-y-4 overflow-hidden bg-white p-2 font-['DejaVu_Sans'] text-[16px] leading-[19px] text-black"
      >
        <p>Hello, Everyone,</p>
        <p>
          {'\u00a0'.repeat(8)}This is a kind reminder of payment of{' '}
          <span className="underline decoration-[#f00] decoration-wavy decoration-1 underline-offset-2">new-cemester</span> tuition. Up to
          sending this e-mail, we haven't received your tuition. Please finish your payment as soon as possible before the deadline.
        </p>
        <p>Regards,</p>
        <p className="flex items-center">
          Anonymnancy@someuniversity.edunancy@someuniversity.edunancy@someuniversity.edu
          <span className="h-[19px] w-px bg-black" />
        </p>
      </div>
      <div className="h-[23px] shrink-0 border-t border-[#d0d0d0]" />

      {/* mouse pointer */}
      <svg viewBox="0 0 10 24" className="pointer-events-none absolute top-[461px] left-[651px] h-6 w-[10px]" fill="none">
        <path d="M1 2H4L5 3L6 2H9M5 3V21M1 22H4L5 21L6 22H9" stroke="#fff" strokeWidth="3.500" />
        <path d="M1 2H4L5 3L6 2H9M5 3V21M1 22H4L5 21L6 22H9" stroke="#333" strokeWidth="1.300" />
      </svg>
    </section>
  );
}

export default function App() {
  return (
    <div className="relative flex h-screen flex-col overflow-hidden font-['Noto_Sans','Noto_Sans_CJK_SC',sans-serif]">
      <TopBar />
      <div className="flex min-h-0 flex-1">
        <Dock />
        <CalcWindow />
      </div>
      <ComposeWindow />
    </div>
  );
}
